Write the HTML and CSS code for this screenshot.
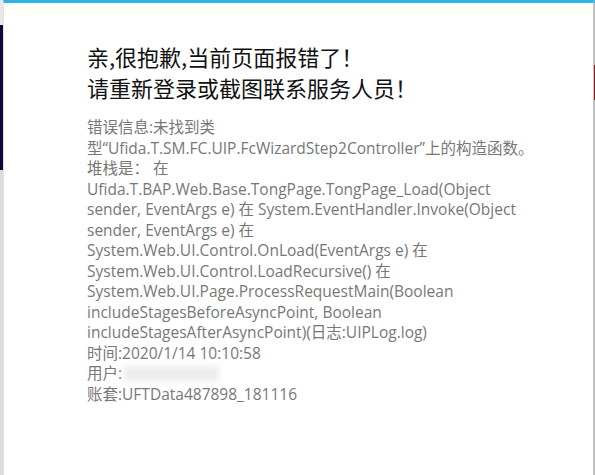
FILE: index.html
```html
<!DOCTYPE html>
<html lang="zh-CN">
<head>
<meta charset="utf-8">
<title>错误</title>
<link rel="stylesheet" href="styles.css">
</head>
<body>
<div class="frame">
  <div class="edge-left"></div>
  <div class="panel">
    <div class="content">
      <h1 class="title">亲,很抱歉,当前页面报错了！<br>请重新登录或截图联系服务人员！</h1>
      <div class="detail">
        <div>错误信息:未找到类<span class="nb">型“Ufida.T.SM.FC.UIP.FcWizardStep2Controller”</span>上的构造函数。</div>
        <div>堆栈是： 在 Ufida.T.BAP.Web.Base.TongPage.TongPage_Load(Object sender, EventArgs e) 在 System.EventHandler.Invoke(Object sender, EventArgs e) 在 System.Web.UI.Control.OnLoad(EventArgs e) 在 System.Web.UI.Control.LoadRecursive() 在 System.Web.UI.Page.ProcessRequestMain(Boolean includeStagesBeforeAsyncPoint, Boolean includeStagesAfterAsyncPoint)(日志:UIPLog.log)</div>
        <div>时间:2020/1/14 10:10:58</div>
        <div>用户:<span class="redact"></span></div>
        <div>账套:UFTData487898_181116</div>
      </div>
    </div>
  </div>
  <div class="edge-right"></div>
</div>
</body>
</html>
```
FILE: styles.css
```css
html, body {
  margin: 0;
  padding: 0;
  background: #ffffff;
}
.frame {
  display: flex;
  width: 595px;
  height: 475px;
  overflow: hidden;
}
.edge-left {
  width: 3px;
  flex: none;
  background: linear-gradient(to bottom, #e8e8e8 0, #e8e8e8 25px, #0c0a3a 25px, #0c0a3a 170px, #dcdcdc 170px, #dcdcdc 100%);
}
.edge-right {
  width: 1px;
  flex: none;
  background: linear-gradient(to bottom, #2db4e8 0, #2db4e8 3px, #bdbdbd 3px, #bdbdbd 65px, #8c1c1c 65px, #8c1c1c 100px, #bdbdbd 100px, #bdbdbd 100%);
}
.panel {
  flex: 1;
  border-top: 3px solid #2db4e8;
  border-left: 1px solid #e2e2e2;
  border-right: 1px solid #c4c4c4;
  background: linear-gradient(to bottom, #fffff6 0, #fffff6 11px, #ffffff 11px);
}
.content {
  padding: 38px 0 0 83px;
  width: 450px;
}
.title {
  margin: 0;
  font-family: "Noto Sans CJK SC", sans-serif;
  font-weight: normal;
  font-size: 22px;
  line-height: 31px;
  color: #111111;
}
.detail {
  margin-top: 14px;
  font-family: "Open Sans", "Noto Sans CJK SC", sans-serif;
  font-size: 15.5px;
  line-height: 20.5px;
  color: #777777;
}
.nb {
  white-space: nowrap;
}
.redact {
  display: inline-block;
  width: 95px;
  height: 15px;
  margin-left: 2px;
  vertical-align: -2px;
  background: #ececec;
  filter: blur(3px);
}
```
